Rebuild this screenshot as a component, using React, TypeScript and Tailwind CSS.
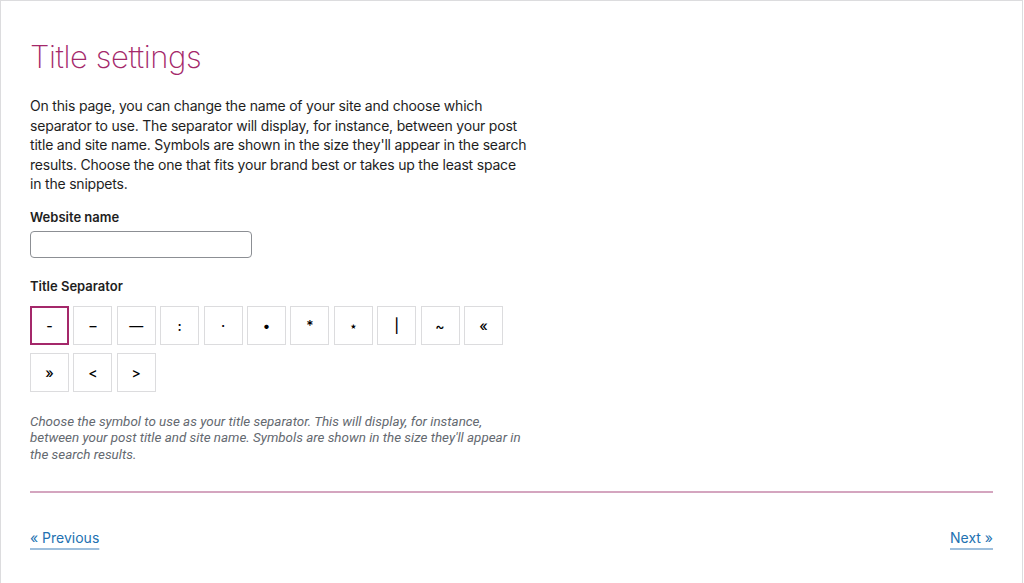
import { useState } from 'react';

const separators = ['-', '–', '—', ':', '·', '•', '*', '⋆', '|', '~', '«', '»', '<', '>'];

const App = () => {
  const [selected, setSelected] = useState(0);
  const [name, setName] = useState('');

  return (
    <div className="w-[1023px] min-h-[583px] border-l border-t border-r border-[#dcdcde] bg-white px-[29px] font-['Inter',sans-serif] text-[#1e1e1e]">
      <h1 className="pt-[36px] text-[31px] leading-[40px] font-extralight text-[#a4286a] tracking-[-0.4px]">
        Title settings
      </h1>

      {/* line breaks follow the reference wrap */}
      <p className="mt-[19px] w-[540px] text-[14px] leading-[19.5px] tracking-[-0.2px]">
        On this page, you can change the name of your site and choose which
        <br />
        separator to use. The separator will display, for instance, between your post
        <br />
        title and site name. Symbols are shown in the size they'll appear in the search
        <br />
        results. Choose the one that fits your brand best or takes up the least space
        <br />
        in the snippets.
      </p>

      <label htmlFor="site-name" className="mt-[14px] block text-[13px] leading-[18px] font-semibold">
        Website name
      </label>
      <input
        id="site-name"
        value={name}
        onChange={(e) => setName(e.target.value)}
        className="mt-[5px] block h-[27px] w-[222px] rounded-[4px] border border-[#8c8f94] px-2 text-[14px] outline-none"
      />

      <div className="mt-[19px] text-[13px] leading-[18px] font-semibold">Title Separator</div>
      <div className="mt-[11px] flex w-[480px] flex-wrap gap-x-[4.4px] gap-y-[8px]">
        {separators.map((s, i) => (
          <button
            key={s}
            onClick={() => setSelected(i)}
            className={`flex h-[39px] w-[39px] items-center justify-center bg-white text-[14px] font-medium text-black ${
              selected === i ? 'border-2 border-[#a4286a]' : 'border border-[#dcdcde]'
            }`}
          >
            {s}
          </button>
        ))}
      </div>

      <p className="mt-[22px] w-[495px] font-['Roboto',sans-serif] text-[13.4px] leading-[16.5px] italic text-[#646970]">
        Choose the symbol to use as your title separator. This will display, for instance, between your post title
        and site name. Symbols are shown in the size they'll appear in the search results.
      </p>

      <hr className="mt-[28px] border-0 border-t-2 border-[#d4a5bf]" />

      <div className="mt-[35px] flex justify-between text-[14px] leading-[20px]">
        <a href="#" className="text-[#2271b1] underline decoration-[#9ebfdc] decoration-2 underline-offset-[5px]">
          « Previous
        </a>
        <a href="#" className="text-[#2271b1] underline decoration-[#9ebfdc] decoration-2 underline-offset-[5px]">
          Next »
        </a>
      </div>
    </div>
  );
};

export default App;
